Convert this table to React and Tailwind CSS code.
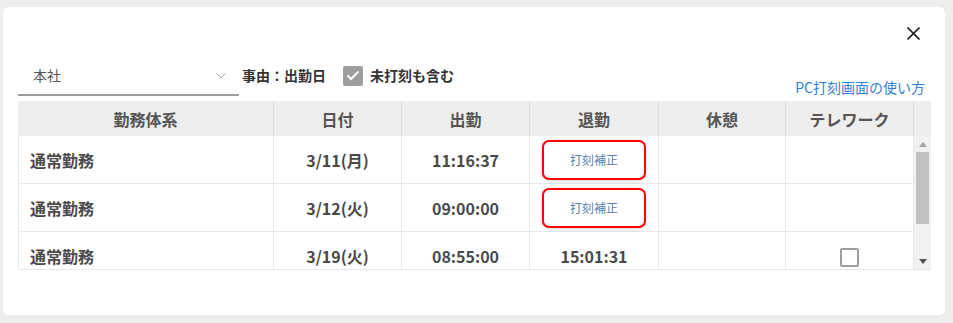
import React from 'react';

const font = { fontFamily: '"Noto Sans CJK JP", "Noto Sans", sans-serif' };

// 勤務データ
const rows = [
  { kind: '通常勤務', date: '3/11(月)', start: '11:16:37', end: null, telework: false },
  { kind: '通常勤務', date: '3/12(火)', start: '09:00:00', end: null, telework: false },
  { kind: '通常勤務', date: '3/19(火)', start: '08:55:00', end: '15:01:31', telework: true },
];

const headers = ['勤務体系', '日付', '出勤', '退勤', '休憩', 'テレワーク'];
const colW = ['w-[256px]', 'w-[128px]', 'w-[128px]', 'w-[129px]', 'w-[127px]', 'w-[128px]'];

function FixButton() {
  return (
    <div className="w-[104px] h-[40px] mx-auto rounded-[7px] border-2 border-[#ff0000] bg-white shadow-[0_1px_5px_rgba(0,0,0,0.15)] flex items-center justify-center text-[12px] font-normal text-[#5b7ea8]">
      打刻補正
    </div>
  );
}

export default function App() {
  return (
    <div className="w-[953px] h-[323px] bg-[#eeeeee] pt-[7px] pl-[3px] pr-[8px] overflow-hidden" style={font}>
      <div className="h-[308px] bg-white rounded-[6px] px-[15px]">
        {/* 閉じる */}
        <div className="flex justify-end pt-[20px] pr-[10px] h-[50px]">
          <svg width="13" height="13" viewBox="0 0 13 13">
            <path d="M0.5 0.5 L12.5 12.5 M12.5 0.5 L0.5 12.5" stroke="#222" strokeWidth="1.6" fill="none" />
          </svg>
        </div>

        {/* フィルター */}
        <div className="flex items-end justify-between">
          <div className="flex items-center">
            <div className="w-[221px] h-[39px] border-b-2 border-[#9e9e9e] flex items-center justify-between pl-[15px] pr-[13px] text-[14px] text-[#555]">
              <span>本社</span>
              <svg width="10" height="6" viewBox="0 0 10 6">
                <path d="M0.5 0.5 L5 5 L9.5 0.5" stroke="#9aa3b0" strokeWidth="1" fill="none" />
              </svg>
            </div>
            <span className="ml-[3px] mb-[2px] text-[14px] font-bold text-[#333]">事由：出勤日</span>
            <div className="ml-[17px] mb-[2px] w-[20px] h-[20px] rounded-[2px] bg-[#9e9e9e] flex items-center justify-center">
              <svg width="14" height="11" viewBox="0 0 14 11">
                <path d="M1.5 5.5 L5 9 L12.5 1.5" stroke="#fff" strokeWidth="2" fill="none" />
              </svg>
            </div>
            <span className="ml-[7px] mb-[2px] text-[14px] font-bold text-[#333]">未打刻も含む</span>
          </div>
          <a className="mr-[5px] mb-[-1px] text-[14px] text-[#2f7fd0] leading-[20px]">PC打刻画面の使い方</a>
        </div>

        {/* テーブル */}
        <div className="mt-[5px] w-[913px]">
          <div className="flex bg-[#eeeeee] h-[35px]">
            {headers.map((h, i) => (
              <div
                key={h}
                className={`${colW[i]} flex items-center justify-center text-[16px] font-bold text-[#555] border-r border-[#dcdcdc]`}
              >
                {h}
              </div>
            ))}
            <div className="flex-1" />
          </div>
          <div className="flex h-[134px] overflow-hidden border-l border-b border-[#e6e7ef]">
            <div className="w-[895px]">
              {rows.map((r, idx) => (
                <div key={idx} className="flex h-[48px] border-b border-[#e6e7ef] text-[16px] font-bold text-[#4a4a4a]">
                  <div className="w-[255px] shrink-0 flex items-center pl-[11px] border-r border-[#e6e7ef]">{r.kind}</div>
                  <div className={`${colW[1]} shrink-0 flex items-center justify-center border-r border-[#e6e7ef]`}>{r.date}</div>
                  <div className={`${colW[2]} shrink-0 flex items-center justify-center border-r border-[#e6e7ef]`}>{r.start}</div>
                  <div className={`${colW[3]} shrink-0 flex items-center justify-center border-r border-[#e6e7ef]`}>
                    {r.end ? r.end : <FixButton />}
                  </div>
                  <div className={`${colW[4]} shrink-0 border-r border-[#e6e7ef]`} />
                  <div className={`${colW[5]} shrink-0 flex items-center justify-center border-r border-[#e6e7ef]`}>
                    {r.telework && (
                      <div className="w-[19px] h-[19px] rounded-[2px] border-2 border-[#9e9e9e] bg-white mt-[4px]" />
                    )}
                  </div>
                </div>
              ))}
            </div>
            {/* スクロールバー */}
            <div className="w-[17px] bg-[#f1f1f1] flex flex-col items-center">
              <svg width="8" height="5" viewBox="0 0 8 5" className="mt-[6px]">
                <path d="M0 5 L4 0 L8 5 Z" fill="#a3a3a3" />
              </svg>
              <div className="w-[13px] h-[72px] bg-[#c1c1c1] mt-[5px]" />
              <div className="flex-1" />
              <svg width="8" height="5" viewBox="0 0 8 5" className="mb-[5px]">
                <path d="M0 0 L4 5 L8 0 Z" fill="#505050" />
              </svg>
            </div>
          </div>
        </div>
      </div>
    </div>
  );
}
